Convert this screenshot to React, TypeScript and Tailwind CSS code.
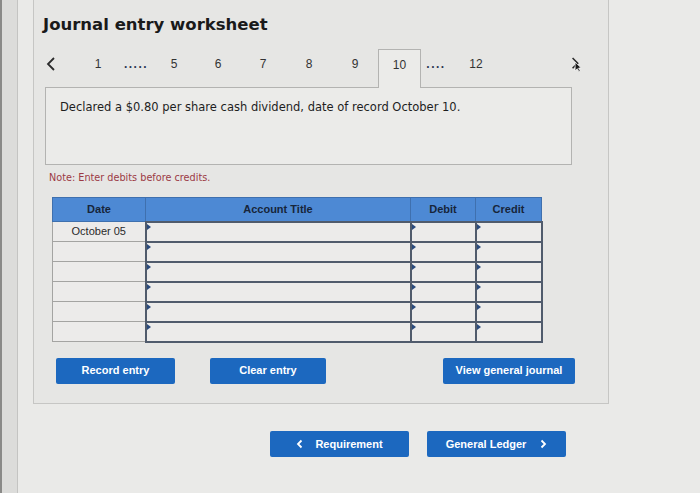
import React from 'react';

const verdana = { fontFamily: '"DejaVu Sans", Verdana, sans-serif' };
const arial = { fontFamily: '"Liberation Sans", Arial, sans-serif' };

const pages = [
  { label: '1', w: 'w-[44px]' },
  { label: '.....', w: 'w-[32px]', dots: true },
  { label: '5', w: 'w-[44px]' },
  { label: '6', w: 'w-[44px]' },
  { label: '7', w: 'w-[46px]' },
  { label: '8', w: 'w-[46px]' },
  { label: '9', w: 'w-[46px]' },
];

function Chevron({ dir }: { dir: 'left' | 'right' }) {
  return (
    <svg width="10" height="16" viewBox="0 0 10 16">
      <polyline
        points={dir === 'left' ? '8,2 2,8 8,14' : '2,2 8,8 2,14'}
        fill="none"
        stroke="#2b2b2b"
        strokeWidth="1.8"
      />
    </svg>
  );
}

function InputCell() {
  return (
    <td className="relative border-2 border-[#505b6c] bg-[#ecebea] p-0">
      <span className="absolute left-0 top-[1px] h-0 w-0 border-y-[3px] border-l-[4px] border-y-transparent border-l-[#2a4a7c]" />
    </td>
  );
}

export default function App() {
  const rows = ['October 05', '', '', '', '', ''];
  return (
    <div className="flex h-[493px] w-[700px] overflow-hidden bg-[#eaeae8] text-[#222]" style={arial}>
      <div className="h-full w-[18px] border-l-2 border-r border-l-[#8a8a88] border-r-[#c4c4c2] bg-[#dcdcda]" />
      <div className="flex flex-1 flex-col">
        <div className="ml-[15px] flex h-[404px] w-[576px] flex-col border-x border-b border-[#c6c6c4] bg-[#e6e6e4]">
          <h1 className="ml-[9px] mt-[15px] h-[20px] text-[16.5px] font-bold leading-[20px] text-[#1a1a1a]" style={verdana}>
            Journal entry worksheet
          </h1>

          <div className="ml-[11px] mt-[14px] flex h-[38px] w-[527px] items-stretch text-[12px] text-[#333]">
            <div className="flex w-[11px] items-center justify-center pb-[8px]">
              <Chevron dir="left" />
            </div>
            <div className="w-[20px]" />
            {pages.map((p) => (
              <div
                key={p.label}
                className={`flex items-center justify-center pb-[8px] ${p.w} ${p.dots ? 'font-bold tracking-[1.5px] text-[#2d3752]' : ''}`}
              >
                {p.label}
              </div>
            ))}
            <div className="relative z-10 -mb-px flex w-[43px] items-center justify-center border-x border-t border-[#b3b3b1] bg-[#ebebe9] pb-[8px]">
              10
            </div>
            <div className="flex w-[30px] items-center justify-center pb-[8px] font-bold tracking-[1.5px] text-[#2d3752]">....</div>
            <div className="ml-[3px] flex w-[44px] items-center justify-center pb-[8px]">12</div>
            <div className="flex-1" />
            <div className="mr-[-10px] flex w-[12px] items-center justify-center pb-[8px]">
              <svg width="14" height="20" viewBox="0 0 14 20">
                <polyline points="3,3 9,9 3,15" fill="none" stroke="#2b2b2b" strokeWidth="1.8" />
                <path d="M6 8 L6 18 L8.5 15.5 L10.5 19 L12 18.2 L10 14.8 L13 14.5 Z" fill="#1a1a1a" stroke="#fff" strokeWidth="0.8" />
              </svg>
            </div>
          </div>

          <div className="ml-[11px] h-[78px] w-[527px] border border-[#b3b3b1] bg-[#ebebe9] pl-[14px] pt-[11px]">
            <p className="text-[11.5px] leading-[16px] text-[#1e1e1e]" style={verdana}>
              Declared a $0.80 per share cash dividend, date of record October 10.
            </p>
          </div>

          <p className="ml-[15px] mt-[7px] h-[12px] text-[9.7px] leading-[12px] text-[#9c3a44]" style={verdana}>
            Note: Enter debits before credits.
          </p>

          <table className="ml-[18px] mt-[13px] w-[489px] table-fixed border-collapse text-[11px]">
            <colgroup>
              <col className="w-[93px]" />
              <col className="w-[265px]" />
              <col className="w-[65px]" />
              <col className="w-[66px]" />
            </colgroup>
            <thead>
              <tr className="h-[24px] bg-[#4d89d4] font-bold text-[#17253a]">
                <th className="border border-[#3f70ae] font-bold">Date</th>
                <th className="border border-[#3f70ae] font-bold">Account Title</th>
                <th className="border border-[#3f70ae] font-bold">Debit</th>
                <th className="border border-[#3f70ae] font-bold">Credit</th>
              </tr>
            </thead>
            <tbody>
              {rows.map((d, i) => (
                <tr key={i} className="h-[20px]">
                  <td className="border border-[#a4a4a2] bg-[#ecebea] text-center text-[#2a2a2a]">{d}</td>
                  <InputCell />
                  <InputCell />
                  <InputCell />
                </tr>
              ))}
            </tbody>
          </table>

          <div className="mt-[15px] flex h-[26px] items-stretch text-[11px] font-bold text-white">
            <button className="ml-[22px] w-[119px] rounded-[2px] bg-[#1c68bf]">Record entry</button>
            <button className="ml-[35px] w-[116px] rounded-[2px] bg-[#1c68bf]">Clear entry</button>
            <button className="ml-[117px] w-[132px] rounded-[2px] bg-[#1c68bf]">View general journal</button>
          </div>
        </div>

        <div className="ml-[252px] mt-[27px] flex h-[26px] gap-[18px] text-[11px] font-bold text-white">
          <button className="flex w-[139px] items-center justify-center gap-[12px] rounded-[2px] bg-[#1c68bf]">
            <svg width="7" height="10" viewBox="0 0 7 10">
              <polyline points="5.5,1.5 2,5 5.5,8.5" fill="none" stroke="#fff" strokeWidth="1.8" />
            </svg>
            Requirement
          </button>
          <button className="flex w-[139px] items-center justify-center gap-[14px] rounded-[2px] bg-[#1c68bf]">
            General Ledger
            <svg width="7" height="10" viewBox="0 0 7 10">
              <polyline points="1.5,1.5 5,5 1.5,8.5" fill="none" stroke="#fff" strokeWidth="1.8" />
            </svg>
          </button>
        </div>
      </div>
    </div>
  );
}
